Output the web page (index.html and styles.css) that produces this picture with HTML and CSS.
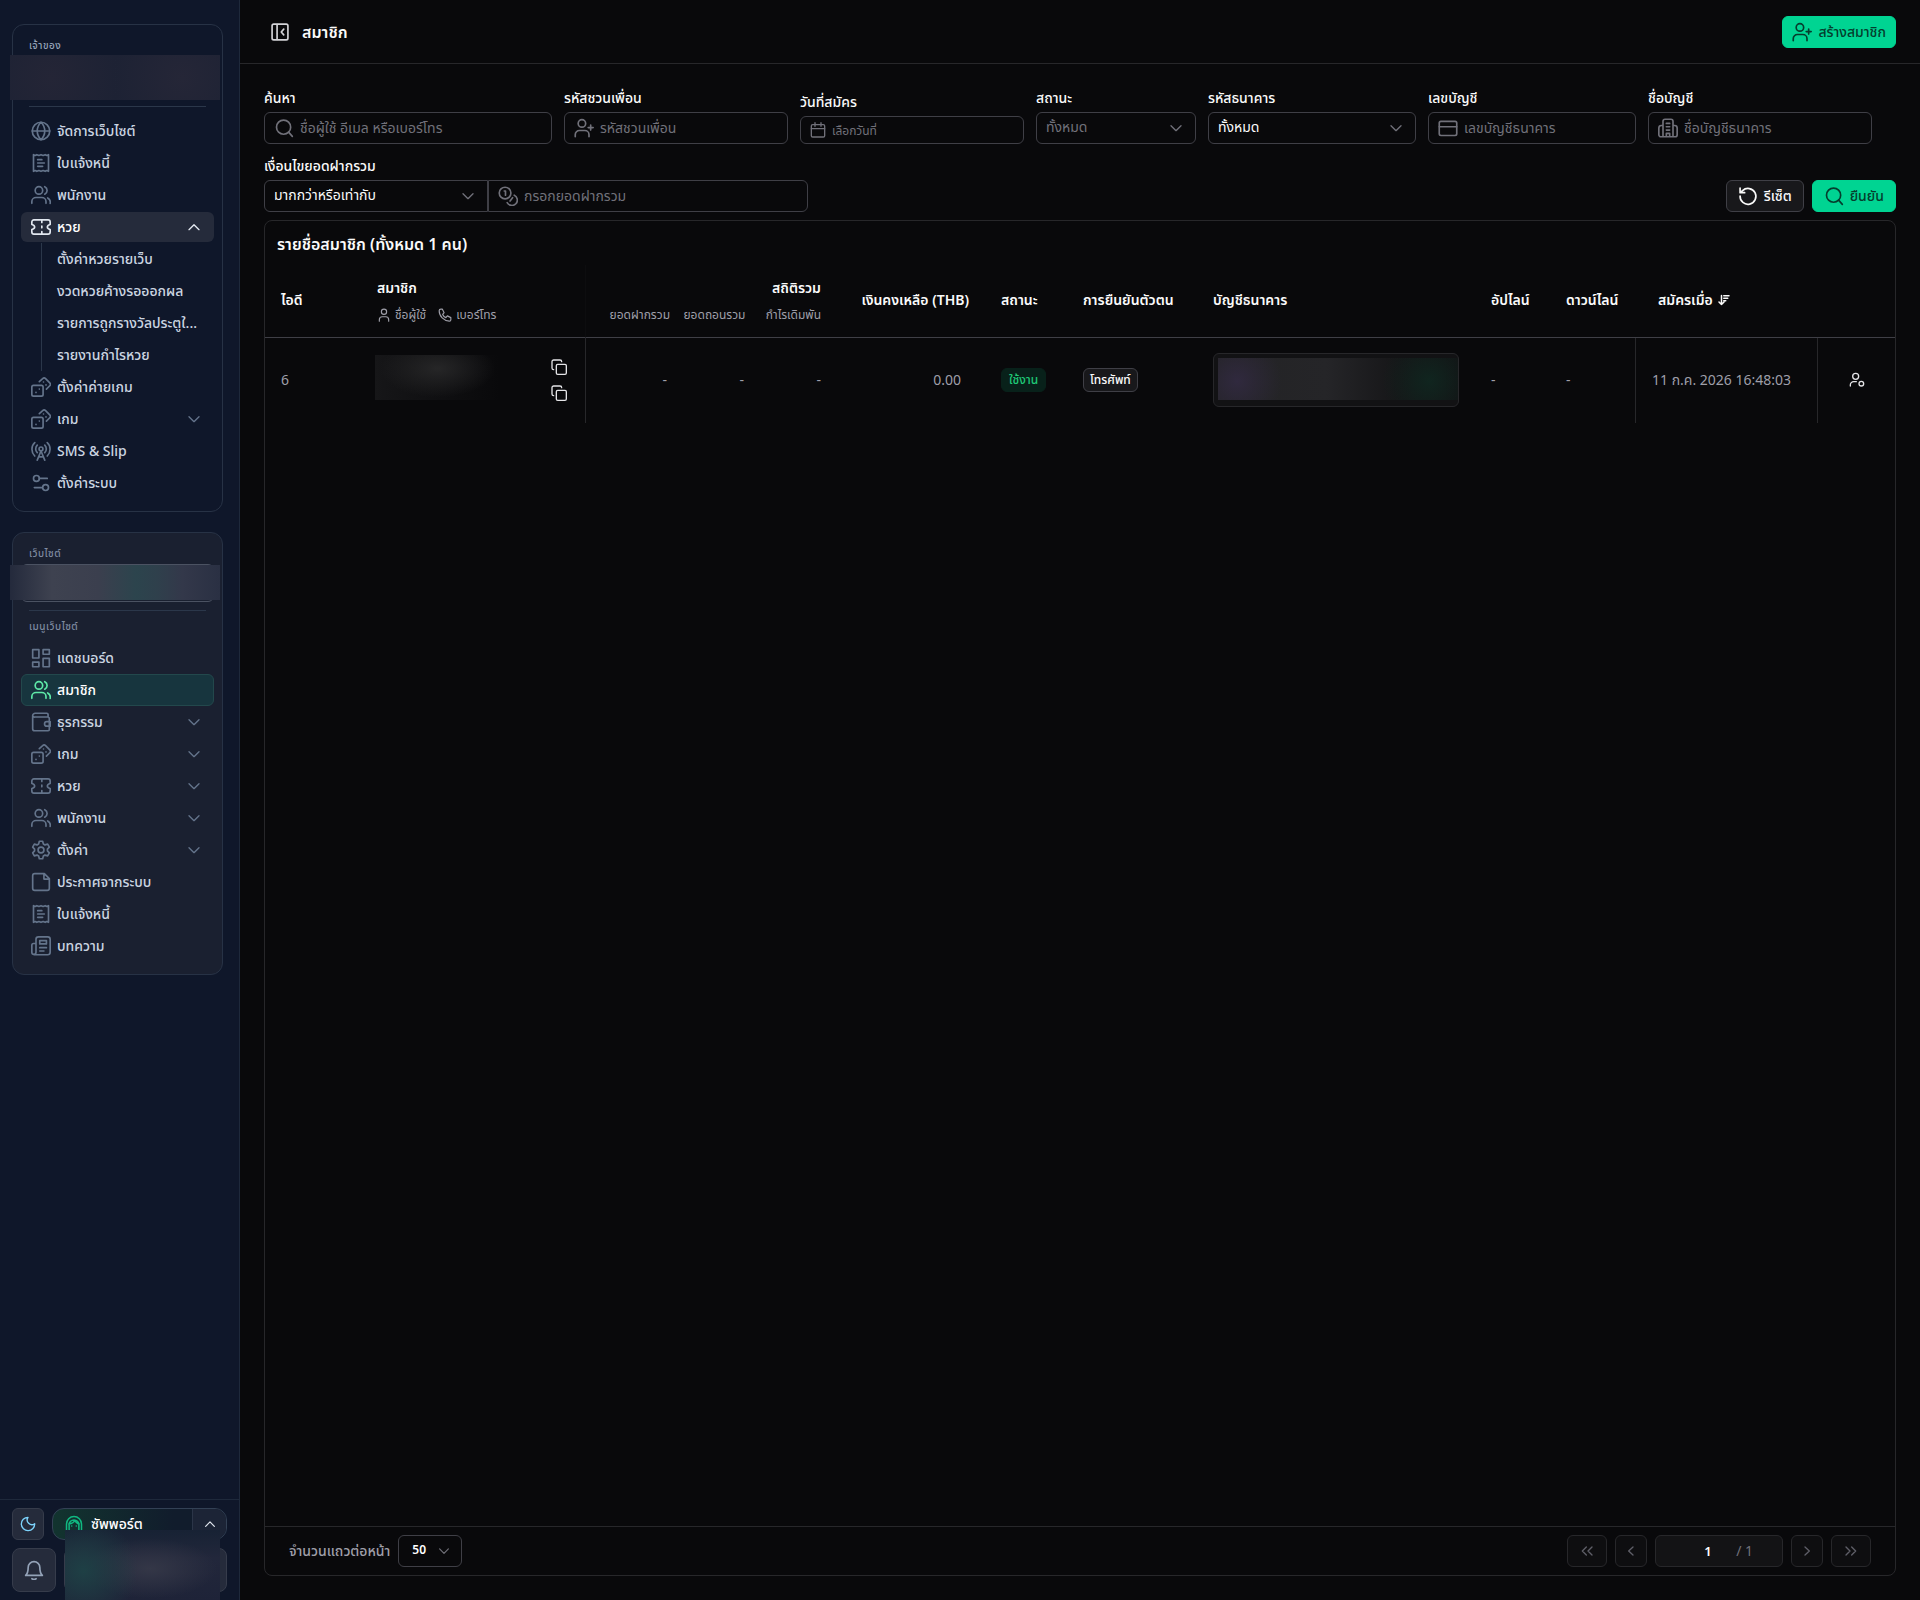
FILE: index.html
```html
<!DOCTYPE html>
<html lang="th">
<head>
    <meta charset="UTF-8">
    <meta name="viewport" content="width=device-width, initial-scale=1.0">
    <title>สมาชิก</title>
    <link rel="stylesheet" href="styles.css">
</head>
<body>

    <!-- Icons -->
    <svg class="icon-defs" aria-hidden="true">
        <symbol id="globe" viewBox="0 0 24 24"><circle cx="12" cy="12" r="10.5"/><path d="M1.5 12h21M12 1.5c-6 6-6 15 0 21M12 1.5c6 6 6 15 0 21"/></symbol>
        <symbol id="receipt" viewBox="0 0 24 24"><path d="M3 2l2 1 2-1 2.500 1L12 2l2.500 1L17 2l2 1 2-1v20l-2-1-2 1-2.500-1-2.500 1-2.500-1L7 22l-2-1-2 1zM8 8h5M8 12h8M8 16h6"/></symbol>
        <symbol id="users" viewBox="0 0 24 24"><circle cx="9.500" cy="6.500" r="4.500"/><path d="M1 22v-2a5 5 0 0 1 5-5h7a5 5 0 0 1 5 5v2M16.500 2a5 5 0 0 1 0 9M20 15.500a6 6 0 0 1 3 6.500"/></symbol>
        <symbol id="ticket" viewBox="0 0 24 24"><path d="M1 9V6a2.500 2.500 0 0 1 2.500-2.500h17A2.500 2.500 0 0 1 23 6v3c-4.500 1-4.500 5 0 6v3a2.500 2.500 0 0 1-2.500 2.500h-17A2.500 2.500 0 0 1 1 18v-3c4.500-1 4.500-5 0-6zM13 4v2.500M13 11v2M13 17.500V20"/></symbol>
        <symbol id="dices" viewBox="0 0 24 24"><rect x="1" y="10" width="13.500" height="13" rx="2"/><path d="M10 5.500l4-3.500a2.500 2.500 0 0 1 3.500 0l5 5a2.500 2.500 0 0 1 0 3.500L18.500 14.500M6 18.500h.01M10 14.500h.01M15 6h.01M18 9.500h.01"/></symbol>
        <symbol id="tower" viewBox="0 0 24 24"><path d="M4.500 18C0 13.500 0 6 4.500 2M7.500 14c-2.500-2.500-2.500-6.500 0-9M16.500 5c2.500 2.500 2.500 6.500 0 9M19.500 2c4.500 4 4.500 11.500 0 16M12 12L7.500 23M12 12l4.500 11M9.500 19h5"/><circle cx="12" cy="9.500" r="2.300"/></symbol>
        <symbol id="sliders" viewBox="0 0 24 24"><circle cx="6.500" cy="6.500" r="3.500"/><path d="M10 6.500h9.500M4 17.500h9.500"/><circle cx="17.500" cy="17.500" r="3.500"/></symbol>
        <symbol id="dashboard" viewBox="0 0 24 24"><path d="M2 2h7.500v10H2zM2 17h7.500v5.500H2zM14.500 2H22v5.500h-7.500zM14.500 12.500H22v10h-7.500z"/></symbol>
        <symbol id="wallet" viewBox="0 0 24 24"><path d="M20.500 6V3a1.500 1.500 0 0 0-1.500-1.500H5A3 3 0 0 0 2 4.500V20a2.500 2.500 0 0 0 2.500 2.500h16A1.500 1.500 0 0 0 22 21V8a2 2 0 0 0-2-2H4.500A2 2 0 0 1 2 4.500M23 11.500h-4a2.750 2.750 0 0 0 0 5.500h4z"/></symbol>
        <symbol id="settings" viewBox="0 0 24 24"><path d="M10 1.500h4l.8 3.200 2 1.200 3.200-.9 2 3.500L19.700 11v2l2.300 2.500-2 3.500-3.200-.9-2 1.200-.8 3.200h-4l-.8-3.200-2-1.200-3.200.9-2-3.500L4.300 13v-2L2 8.500 4 5l3.200.9 2-1.200z"/><circle cx="12" cy="12" r="3.500"/></symbol>
        <symbol id="note" viewBox="0 0 24 24"><path d="M16 2H4.500A2.500 2.500 0 0 0 2 4.500v15A2.500 2.500 0 0 0 4.500 22h15a2.500 2.500 0 0 0 2.500-2.500V8zM15.500 2v6.500H22"/></symbol>
        <symbol id="news" viewBox="0 0 24 24"><path d="M3.500 22.500H20a3 3 0 0 0 3-3V4a3 3 0 0 0-3-3H9a3 3 0 0 0-3 3v15.500a2.500 2.500 0 0 1-5 0V11a2 2 0 0 1 2-2h3M10.500 5.500h8v4h-8zM10.500 14h8M10.500 18h5"/></symbol>
        <symbol id="moon" viewBox="0 0 24 24"><path d="M12 2a7 7 0 0 0 10 9.500A10 10 0 1 1 12 2z"/></symbol>
        <symbol id="bell" viewBox="0 0 24 24"><path d="M2 18.500c2-2 3-4 3-9.500a7 7 0 0 1 14 0c0 5.500 1 7.500 3 9.500zM9.500 22.500c1.500 1 3.500 1 5 0"/></symbol>
        <symbol id="agent" viewBox="0 0 24 24"><path d="M2 22V12a10 10 0 0 1 20 0v10M5.500 22v-9a6.500 6.500 0 0 1 13 0v9M5 12c4-.5 7-2 8-5 1 2.500 3 4.500 6 5M9 14.500h.01M15 14.500h.01"/></symbol>
        <symbol id="panel" viewBox="0 0 24 24"><rect x="2.500" y="2.500" width="19" height="19" rx="2"/><path d="M8.500 3v18M16.500 8.500L13.500 12l3 3.500"/></symbol>
        <symbol id="user-plus" viewBox="0 0 24 24"><circle cx="9.500" cy="6.500" r="4.500"/><path d="M1.500 22.500V20a5 5 0 0 1 5-5h6.500a5 5 0 0 1 5 5v2.500M20 8.500v6M17 11.500h6"/></symbol>
        <symbol id="search" viewBox="0 0 24 24"><circle cx="11.500" cy="11" r="8.500"/><path d="M17.500 17l4.500 5"/></symbol>
        <symbol id="calendar" viewBox="0 0 24 24"><rect x="2" y="4" width="20" height="18.500" rx="2"/><path d="M2 10h20M7.500 1v5.500M16.500 1v5.500"/></symbol>
        <symbol id="down" viewBox="0 0 24 24"><path d="M4.500 8.500l7.500 7.500 7.500-7.500"/></symbol>
        <symbol id="up" viewBox="0 0 24 24"><path d="M4.500 16L12 8.500l7.500 7.500"/></symbol>
        <symbol id="left" viewBox="0 0 24 24"><path d="M15 6l-6.500 6 6.500 6"/></symbol>
        <symbol id="right" viewBox="0 0 24 24"><path d="M9 6l6.500 6L9 18"/></symbol>
        <symbol id="first" viewBox="0 0 24 24"><path d="M11 6l-6 6 6 6M19.500 6l-6 6 6 6"/></symbol>
        <symbol id="last" viewBox="0 0 24 24"><path d="M4.500 6l6 6-6 6M13 6l6 6-6 6"/></symbol>
        <symbol id="card" viewBox="0 0 24 24"><rect x="1.500" y="4" width="21" height="17" rx="2"/><path d="M1.500 10.500h21"/></symbol>
        <symbol id="building" viewBox="0 0 24 24"><path d="M6 22.500V4a2.500 2.500 0 0 1 2.500-2.500h7A2.500 2.500 0 0 1 18 4v18.500M6 9H4a3 3 0 0 0-3 3v8a2.500 2.500 0 0 0 2.500 2.500h17A2.500 2.500 0 0 0 23 20v-8a3 3 0 0 0-3-3h-2M10 6.500h4M10 10.500h4M10 14.500h4M10 22v-3.500h4V22"/></symbol>
        <symbol id="coins" viewBox="0 0 24 24"><circle cx="8.500" cy="8.500" r="7"/><path d="M7.500 6H9v5M19.500 11a6.500 6.500 0 1 1-8.500 9M17.500 14l-3 4"/></symbol>
        <symbol id="undo" viewBox="0 0 24 24"><path d="M2.500 12a9.500 9.500 0 1 0 3-6.500L2.500 8M2.500 2.500V8H8"/></symbol>
        <symbol id="user" viewBox="0 0 24 24"><circle cx="12" cy="6.500" r="4.500"/><path d="M4 22.500V20a5 5 0 0 1 5-5h6a5 5 0 0 1 5 5v2.500"/></symbol>
        <symbol id="phone" viewBox="0 0 24 24"><path d="M2 4.500C2 3 3.500 2 5 2h2.500l3 6-2.500 3c1 2.500 3 4.500 5.500 5.500l2.500-3 6 3V20c0 1.500-1 2.500-2.500 2.500C10 22 2 14 2 4.500z"/></symbol>
        <symbol id="copy" viewBox="0 0 24 24"><rect x="8" y="8" width="15" height="15" rx="2"/><path d="M4 16a2.500 2.500 0 0 1-2.500-2.500V4A2.500 2.500 0 0 1 4 1.500h9.500A2.500 2.500 0 0 1 16 4"/></symbol>
        <symbol id="sort" viewBox="0 0 24 24"><path d="M7 3v18M2 16l5 5 5-5M11.500 3.500H22M11.500 8.500h8M11.500 13.500h4"/></symbol>
        <symbol id="user-cog" viewBox="0 0 24 24"><circle cx="10" cy="6.500" r="4.500"/><path d="M2 21v-1.500a5 5 0 0 1 5-5h4"/><circle cx="18.500" cy="17.500" r="3.500"/></symbol>
    </svg>

    <aside class="sidebar">
        <div class="sidebar-scroll">

            <!-- Owner -->
            <section class="nav-card">
                <p class="nav-label">เจ้าของ</p>
                <div class="masked masked-owner"></div>
                <hr class="nav-line">
                <nav class="nav-list">
                    <a class="nav-item" href="#"><svg class="icon"><use href="#globe"/></svg><span>จัดการเว็บไซต์</span></a>
                    <a class="nav-item" href="#"><svg class="icon"><use href="#receipt"/></svg><span>ใบแจ้งหนี้</span></a>
                    <a class="nav-item" href="#"><svg class="icon"><use href="#users"/></svg><span>พนักงาน</span></a>
                    <button class="nav-item opened" type="button"><svg class="icon"><use href="#ticket"/></svg><span>หวย</span><svg class="chevron"><use href="#up"/></svg></button>
                    <div class="nav-sub">
                        <a href="#">ตั้งค่าหวยรายเว็บ</a>
                        <a href="#">งวดหวยค้างรอออกผล</a>
                        <a href="#">รายการถูกรางวัลประตูใ...</a>
                        <a href="#">รายงานกำไรหวย</a>
                    </div>
                    <a class="nav-item" href="#"><svg class="icon"><use href="#dices"/></svg><span>ตั้งค่าค่ายเกม</span></a>
                    <button class="nav-item" type="button"><svg class="icon"><use href="#dices"/></svg><span>เกม</span><svg class="chevron"><use href="#down"/></svg></button>
                    <a class="nav-item" href="#"><svg class="icon"><use href="#tower"/></svg><span>SMS &amp; Slip</span></a>
                    <a class="nav-item" href="#"><svg class="icon"><use href="#sliders"/></svg><span>ตั้งค่าระบบ</span></a>
                </nav>
            </section>

            <!-- Website -->
            <section class="nav-card site-card">
                <p class="nav-label">เว็บไซต์</p>
                <div class="site-picker"><div class="masked masked-site"></div></div>
                <hr class="nav-line">
                <p class="nav-label menu-label">เมนูเว็บไซต์</p>
                <nav class="nav-list">
                    <a class="nav-item" href="#"><svg class="icon"><use href="#dashboard"/></svg><span>แดชบอร์ด</span></a>
                    <a class="nav-item current" href="#" aria-current="page"><svg class="icon"><use href="#users"/></svg><span>สมาชิก</span></a>
                    <button class="nav-item" type="button"><svg class="icon"><use href="#wallet"/></svg><span>ธุรกรรม</span><svg class="chevron"><use href="#down"/></svg></button>
                    <button class="nav-item" type="button"><svg class="icon"><use href="#dices"/></svg><span>เกม</span><svg class="chevron"><use href="#down"/></svg></button>
                    <button class="nav-item" type="button"><svg class="icon"><use href="#ticket"/></svg><span>หวย</span><svg class="chevron"><use href="#down"/></svg></button>
                    <button class="nav-item" type="button"><svg class="icon"><use href="#users"/></svg><span>พนักงาน</span><svg class="chevron"><use href="#down"/></svg></button>
                    <button class="nav-item" type="button"><svg class="icon"><use href="#settings"/></svg><span>ตั้งค่า</span><svg class="chevron"><use href="#down"/></svg></button>
                    <a class="nav-item" href="#"><svg class="icon"><use href="#note"/></svg><span>ประกาศจากระบบ</span></a>
                    <a class="nav-item" href="#"><svg class="icon"><use href="#receipt"/></svg><span>ใบแจ้งหนี้</span></a>
                    <a class="nav-item" href="#"><svg class="icon"><use href="#news"/></svg><span>บทความ</span></a>
                </nav>
            </section>
        </div>

        <div class="sidebar-footer">
            <div class="footer-row">
                <button class="theme-button" type="button" aria-label="theme"><svg class="icon"><use href="#moon"/></svg></button>
                <div class="support">
                    <button class="support-main" type="button"><svg class="icon"><use href="#agent"/></svg><span>ซัพพอร์ต</span></button>
                    <button class="support-more" type="button" aria-label="more"><svg class="icon"><use href="#up"/></svg></button>
                </div>
            </div>
            <div class="footer-row">
                <button class="bell-button" type="button" aria-label="notifications"><svg class="icon"><use href="#bell"/></svg></button>
                <div class="account"><div class="masked masked-account"></div></div>
            </div>
        </div>
    </aside>

    <main class="main">
        <header class="topbar">
            <button class="panel-button" type="button" aria-label="sidebar"><svg class="icon"><use href="#panel"/></svg></button>
            <h1>สมาชิก</h1>
            <button class="button primary create" type="button"><svg class="icon"><use href="#user-plus"/></svg>สร้างสมาชิก</button>
        </header>

        <div class="content">
            <form class="filters">
                <div class="field w-288">
                    <label for="search-text">ค้นหา</label>
                    <div class="control"><svg class="icon"><use href="#search"/></svg><input id="search-text" type="text" placeholder="ชื่อผู้ใช้ อีเมล หรือเบอร์โทร"></div>
                </div>
                <div class="field w-224">
                    <label for="referral">รหัสชวนเพื่อน</label>
                    <div class="control"><svg class="icon"><use href="#user-plus"/></svg><input id="referral" type="text" placeholder="รหัสชวนเพื่อน"></div>
                </div>
                <div class="field w-224">
                    <label for="date">วันที่สมัคร</label>
                    <div class="control small"><svg class="icon"><use href="#calendar"/></svg><input id="date" type="text" placeholder="เลือกวันที่"></div>
                </div>
                <div class="field w-160">
                    <label for="status">สถานะ</label>
                    <div class="control muted"><select id="status"><option>ทั้งหมด</option></select><svg class="chevron"><use href="#down"/></svg></div>
                </div>
                <div class="field w-208">
                    <label for="bank">รหัสธนาคาร</label>
                    <div class="control"><select id="bank"><option>ทั้งหมด</option></select><svg class="chevron"><use href="#down"/></svg></div>
                </div>
                <div class="field w-208">
                    <label for="acc-no">เลขบัญชี</label>
                    <div class="control"><svg class="icon"><use href="#card"/></svg><input id="acc-no" type="text" placeholder="เลขบัญชีธนาคาร"></div>
                </div>
                <div class="field w-224">
                    <label for="acc-name">ชื่อบัญชี</label>
                    <div class="control"><svg class="icon"><use href="#building"/></svg><input id="acc-name" type="text" placeholder="ชื่อบัญชีธนาคาร"></div>
                </div>
                <div class="field deposit">
                    <label for="deposit-rule">เงื่อนไขยอดฝากรวม</label>
                    <div class="control-group">
                        <div class="control w-224"><select id="deposit-rule"><option>มากกว่าหรือเท่ากับ</option></select><svg class="chevron"><use href="#down"/></svg></div>
                        <div class="control w-320"><svg class="icon"><use href="#coins"/></svg><input type="text" aria-label="กรอกยอดฝากรวม" placeholder="กรอกยอดฝากรวม"></div>
                    </div>
                </div>
                <div class="filter-actions">
                    <button class="button" type="reset"><svg class="icon"><use href="#undo"/></svg>รีเซ็ต</button>
                    <button class="button primary" type="submit"><svg class="icon"><use href="#search"/></svg>ยืนยัน</button>
                </div>
            </form>

            <section class="panel">
                <h2>รายชื่อสมาชิก (ทั้งหมด 1 คน)</h2>
                <div class="table-wrap">
                    <table>
                        <colgroup>
                            <col class="c-id"><col class="c-member"><col class="c-stats"><col class="c-balance"><col class="c-status"><col class="c-verify"><col class="c-bank"><col class="c-up"><col class="c-down"><col class="c-date"><col class="c-action">
                        </colgroup>
                        <thead>
                            <tr>
                                <th>ไอดี</th>
                                <th class="split-line">
                                    สมาชิก
                                    <div class="head-sub"><span><svg class="icon"><use href="#user"/></svg>ชื่อผู้ใช้</span><span><svg class="icon"><use href="#phone"/></svg>เบอร์โทร</span></div>
                                </th>
                                <th class="stats-head">
                                    สถิติรวม
                                    <div class="stats"><span>ยอดฝากรวม</span><span>ยอดถอนรวม</span><span>กำไรเดิมพัน</span></div>
                                </th>
                                <th class="number">เงินคงเหลือ (THB)</th>
                                <th>สถานะ</th>
                                <th>การยืนยันตัวตน</th>
                                <th>บัญชีธนาคาร</th>
                                <th>อัปไลน์</th>
                                <th>ดาวน์ไลน์</th>
                                <th><button class="sort" type="button">สมัครเมื่อ<svg class="icon"><use href="#sort"/></svg></button></th>
                                <th></th>
                            </tr>
                        </thead>
                        <tbody>
                            <tr>
                                <td>6</td>
                                <td class="line">
                                    <div class="member">
                                        <div class="masked masked-member"></div>
                                        <div class="copies">
                                            <button type="button" aria-label="copy"><svg class="icon"><use href="#copy"/></svg></button>
                                            <button type="button" aria-label="copy"><svg class="icon"><use href="#copy"/></svg></button>
                                        </div>
                                    </div>
                                </td>
                                <td><div class="stats values"><span>-</span><span>-</span><span>-</span></div></td>
                                <td class="number">0.00</td>
                                <td><span class="badge active">ใช้งาน</span></td>
                                <td><span class="badge">โทรศัพท์</span></td>
                                <td><div class="bank-box"><div class="masked masked-bank"></div></div></td>
                                <td>-</td>
                                <td class="line">-</td>
                                <td class="line">11 ก.ค. 2026 16:48:03</td>
                                <td class="action"><button type="button" aria-label="manage"><svg class="icon"><use href="#user-cog"/></svg></button></td>
                            </tr>
                        </tbody>
                    </table>
                </div>
                <footer class="pager">
                    <label for="rows">จำนวนแถวต่อหน้า</label>
                    <div class="control rows"><select id="rows"><option>50</option></select><svg class="chevron"><use href="#down"/></svg></div>
                    <div class="pages">
                        <button class="page-button wide" type="button" aria-label="first" disabled><svg class="icon"><use href="#first"/></svg></button>
                        <button class="page-button" type="button" aria-label="previous" disabled><svg class="icon"><use href="#left"/></svg></button>
                        <div class="page-box"><input type="text" value="1" aria-label="page"><span>/ 1</span></div>
                        <button class="page-button" type="button" aria-label="next" disabled><svg class="icon"><use href="#right"/></svg></button>
                        <button class="page-button wide" type="button" aria-label="last" disabled><svg class="icon"><use href="#last"/></svg></button>
                    </div>
                </footer>
            </section>
        </div>
    </main>

</body>
</html>
```
FILE: styles.css
```css
* {
    box-sizing: border-box;
}

body {
    margin: 0;
    display: flex;
    min-height: 100vh;
    background-color: #09090b;
    color: #fafafa;
    font-family: "Noto Sans", "Noto Sans Thai", sans-serif;
    font-size: 14px;
    line-height: 20px;
}

button, input, select {
    font: inherit;
    color: inherit;
    background: none;
    border: none;
    padding: 0;
    margin: 0;
}

button {
    cursor: pointer;
}

a {
    color: inherit;
    text-decoration: none;
}

.icon-defs {
    position: absolute;
    width: 0;
    height: 0;
}

.icon, .chevron {
    flex: none;
    width: 20px;
    height: 20px;
    fill: none;
    stroke: currentColor;
    stroke-width: 2;
    stroke-linecap: round;
    stroke-linejoin: round;
}

.chevron {
    width: 16px;
    height: 16px;
}

/* Sidebar */
.sidebar {
    position: sticky;
    top: 0;
    flex: none;
    display: flex;
    flex-direction: column;
    width: 240px;
    height: 100vh;
    background-color: #0f172a;
    border-right: 1px solid #1e293b;
    color: #cbd5e1;
    overflow: hidden;
}

.sidebar-scroll {
    flex: 1;
    min-height: 0;
    display: flex;
    flex-direction: column;
    gap: 20px;
    padding: 24px 16px 0 12px;
    overflow: hidden;
}

.nav-card {
    flex: none;
    padding: 10px 8px 12px;
    border: 1px solid #273245;
    border-radius: 12px;
}

.site-card {
    background-color: #1a2030;
}

.nav-label {
    margin: 0;
    padding: 0 8px;
    font-size: 10px;
    line-height: 20px;
    font-weight: 500;
    letter-spacing: 0.5px;
    color: #94a3b8;
}

.site-card .nav-label {
    color: #7f8ba0;
}

.nav-line {
    height: 1px;
    margin: 6px 8px 8px;
    border: none;
    background-color: #2b374a;
}

.site-card .nav-line {
    margin: 8px 8px 5px;
}

.nav-item {
    display: flex;
    align-items: center;
    gap: 6px;
    width: 100%;
    height: 32px;
    padding: 0 11px 0 9px;
    border: 1px solid transparent;
    border-radius: 6px;
    font-weight: 500;
    text-align: left;
}

.nav-item .icon {
    color: #64748b;
}

.nav-item span {
    flex: 1;
}

.nav-item .chevron {
    color: #64748b;
}

.nav-item.opened {
    height: 30px;
    margin: 1px 0;
    background-color: #252b3b;
    color: #fff;
}

.nav-item.opened .icon, .nav-item.opened .chevron {
    color: #e2e8f0;
}

.nav-item.current {
    background-color: #17353e;
    border-color: #23484c;
    color: #fff;
}

.nav-item.current .icon {
    color: #5ee9a8;
}

.nav-sub {
    margin-left: 20px;
    border-left: 1px solid #2b374a;
    font-weight: 500;
}

.nav-sub a {
    display: block;
    height: 32px;
    padding-left: 15px;
    line-height: 32px;
    white-space: nowrap;
}

/* Hidden account details */
.masked-owner {
    height: 45px;
    margin: 0 -6px 0 -11px;
    background: radial-gradient(circle at 20% 50%, #242536, transparent 40%), radial-gradient(circle at 82% 50%, #252637, transparent 40%), #1d2234;
}

.site-picker {
    height: 38px;
    margin-top: 1px;
    border: 1px solid #4b5262;
    border-radius: 6px;
}

.masked-site {
    height: 35px;
    margin: 0 -7px 0 -12px;
    background: linear-gradient(90deg, #242a3c, #3e4250 20%, #3b3f4e 42%, #2c444d 60%, #2f404c 70%, #33384a 82%, #2a3043);
}

.menu-label {
    margin-bottom: 6px;
}

.sidebar-footer {
    flex: none;
    display: flex;
    flex-direction: column;
    gap: 8px;
    padding: 8px 12px;
    border-top: 1px solid #1e293b;
}

.footer-row {
    display: flex;
    gap: 8px;
}

.theme-button, .bell-button {
    flex: none;
    display: flex;
    align-items: center;
    justify-content: center;
    width: 32px;
    height: 32px;
    background-color: #252b3b;
    border: 1px solid #363c4b;
    border-radius: 6px;
    color: #7dd3fc;
}

.theme-button .icon {
    width: 16px;
    height: 16px;
}

.bell-button {
    width: 44px;
    height: 44px;
    border-radius: 8px;
    color: #94a3b8;
}

.support {
    flex: 1;
    display: flex;
    height: 32px;
    border: 1px solid #334155;
    border-radius: 12px;
    background: linear-gradient(90deg, #12342f, #111c2c 70%);
    overflow: hidden;
}

.support-main {
    flex: 1;
    display: flex;
    align-items: center;
    gap: 8px;
    padding-left: 12px;
    color: #fff;
    font-weight: 500;
}

.support-main .icon {
    width: 18px;
    height: 18px;
    color: #10b981;
}

.support-more {
    display: flex;
    align-items: center;
    justify-content: center;
    width: 34px;
    background-color: #1c2436;
    border-left: 1px solid #2b3548;
    color: #e2e8f0;
}

.support-more .icon {
    width: 14px;
    height: 14px;
}

.account {
    position: relative;
    flex: 1;
    height: 44px;
    border: 1px solid #363c4b;
    border-radius: 8px;
    background-color: #252b3b;
}

.masked-account {
    position: absolute;
    left: 0;
    right: 6px;
    top: -19px;
    bottom: -9px;
    background: radial-gradient(circle at 12% 58%, #1e4045, transparent 38%), radial-gradient(ellipse at 55% 55%, #343747, transparent 55%), linear-gradient(#172234, #22273b 40%, #1e2338);
}

/* Main */
.main {
    flex: 1;
    min-width: 0;
    display: flex;
    flex-direction: column;
}

.topbar {
    display: flex;
    align-items: center;
    gap: 12px;
    height: 64px;
    padding: 0 24px 0 30px;
    border-bottom: 1px solid #27272a;
}

.panel-button {
    display: flex;
    color: #d4d4d8;
}

h1 {
    flex: 1;
    margin: 0;
    font-size: 16px;
    line-height: 24px;
    font-weight: 600;
}

.button {
    display: flex;
    align-items: center;
    gap: 6px;
    height: 32px;
    padding: 0 11px;
    background-color: #18181b;
    border: 1px solid #3f3f46;
    border-radius: 6px;
    font-weight: 500;
}

.button.primary {
    background-color: #00d492;
    border-color: #00d492;
    color: #053d2d;
}

.button.create {
    padding: 0 9px;
}

.content {
    flex: 1;
    display: flex;
    flex-direction: column;
    gap: 8px;
    padding: 24px;
}

.filters {
    display: flex;
    flex-wrap: wrap;
    align-items: flex-end;
    gap: 12px;
}

.field {
    display: flex;
    flex-direction: column;
    gap: 4px;
}

.field label {
    font-weight: 500;
}

.w-160 { width: 160px; }
.w-208 { width: 208px; }
.w-224 { width: 224px; }
.w-288 { width: 288px; }
.w-320 { width: 320px; }

.control {
    display: flex;
    align-items: center;
    gap: 6px;
    height: 32px;
    padding: 0 9px;
    border: 1px solid #3f3f46;
    border-radius: 6px;
}

.control .icon, .control .chevron {
    color: #71717a;
}

.control .chevron {
    margin-right: 2px;
}

.control input, .control select {
    flex: 1;
    min-width: 0;
    height: 30px;
    padding-bottom: 2px;
    outline: none;
}

.control select {
    appearance: none;
}

.control.muted select, .control input::placeholder {
    color: #71717a;
    opacity: 1;
}

.control.small {
    height: 28px;
    font-size: 12px;
}

.control.small input {
    height: 26px;
    padding-bottom: 0;
}

.control.small .icon {
    width: 16px;
    height: 16px;
}

.control-group {
    display: flex;
}

.control-group .control:first-child {
    border-radius: 6px 0 0 6px;
}

.control-group .control:last-child {
    border-radius: 0 6px 6px 0;
}

.filter-actions {
    display: flex;
    gap: 8px;
    margin-left: auto;
}

/* Members table */
.panel {
    flex: 1;
    display: flex;
    flex-direction: column;
    border: 1px solid #27272a;
    border-radius: 8px;
}

h2 {
    margin: 0;
    padding: 11px 12px 9px;
    font-size: 16px;
    line-height: 24px;
    font-weight: 600;
}

.table-wrap {
    flex: 1;
}

table {
    width: 100%;
    table-layout: fixed;
    border-collapse: separate;
    border-spacing: 0;
}

.c-id { width: 96px; }
.c-member { width: 225px; }
.c-stats { width: 251px; }
.c-balance { width: 148px; }
.c-status { width: 82px; }
.c-verify { width: 130px; }
.c-bank { width: 278px; }
.c-up { width: 75px; }
.c-down { width: 86px; }
.c-date { width: 182px; }
.c-action { width: 77px; }

th, td {
    padding: 0 16px 2px;
    text-align: left;
    white-space: nowrap;
}

th {
    height: 73px;
    border-bottom: 1px solid #3f3f46;
    font-weight: 600;
}

th.split-line {
    border-right: 1px solid #0d0d0f;
}

th.split-line, th.stats-head {
    padding-bottom: 0;
}

td {
    height: 85px;
    color: #9f9fa9;
}

td.line {
    border-right: 1px solid #27272a;
}

th.number {
    text-align: right;
}

td.number {
    padding-right: 24px;
    text-align: right;
}

.head-sub {
    display: flex;
    gap: 12px;
    margin-top: 7px;
    font-size: 12px;
    font-weight: 400;
    color: #9f9fa9;
}

.head-sub span {
    display: flex;
    align-items: center;
    gap: 4px;
}

.head-sub .icon {
    width: 14px;
    height: 14px;
}

.stats-head {
    text-align: right;
}

.stats {
    display: grid;
    grid-template-columns: 61px 1fr 1fr;
    gap: 12px;
    margin-top: 7px;
    padding-left: 7px;
    font-size: 12px;
    font-weight: 400;
    text-align: right;
    color: #9f9fa9;
}

.stats.values {
    grid-template-columns: repeat(3, 1fr);
    margin-top: 0;
    padding-left: 0;
    font-size: 14px;
}

.member, .copies {
    display: flex;
}

.member {
    align-items: center;
    justify-content: space-between;
    margin-left: -2px;
    padding-right: 2px;
}

.masked-member {
    width: 125px;
    height: 45px;
    margin-bottom: 4px;
    background: radial-gradient(ellipse at 50% 30%, #262627, transparent 65%), linear-gradient(90deg, #161618, transparent);
}

.copies {
    flex-direction: column;
    gap: 10px;
}

.copies button, .action button {
    display: flex;
    color: #e4e4e7;
}

.copies .icon, .action .icon {
    width: 16px;
    height: 16px;
}

.action button {
    margin: 0 auto;
}

.badge {
    display: inline-block;
    padding: 1px 6px;
    border: 1px solid #3f3f46;
    border-radius: 6px;
    background-color: #18181b;
    color: #fafafa;
    font-size: 12px;
    font-weight: 500;
}

.badge.active {
    padding: 1px 7px;
    background-color: #08211a;
    border-color: #08211a;
    color: #1fc977;
}

.bank-box {
    height: 54px;
    padding: 4px 0 6px 4px;
    border: 1px solid #27272a;
    border-radius: 6px;
    background-color: #121214;
}

.masked-bank {
    height: 42px;
    background: radial-gradient(circle at 8% 55%, #30293e, transparent 20%), radial-gradient(circle at 88% 55%, #10251f, transparent 22%), linear-gradient(90deg, #232325, #252528 45%, #161618 75%, #121214);
}

.sort {
    display: flex;
    align-items: center;
    gap: 5px;
    padding-left: 6px;
    font-weight: 600;
}

.sort .icon {
    width: 12px;
    height: 12px;
    stroke-width: 3;
}

.pager {
    display: flex;
    align-items: center;
    gap: 8px;
    height: 49px;
    padding: 0 24px;
    border-top: 1px solid #27272a;
    color: #9f9fa9;
}

.pager label {
    font-weight: 500;
}

.rows {
    width: 64px;
    padding: 0 10px 0 13px;
    color: #fff;
    font-size: 12px;
    font-weight: 600;
}

.rows .chevron {
    width: 14px;
    height: 14px;
    margin: 0;
}

.pages {
    display: flex;
    gap: 8px;
    margin-left: auto;
}

.page-button {
    display: flex;
    align-items: center;
    justify-content: center;
    width: 32px;
    height: 32px;
    border: 1px solid #27272a;
    border-radius: 6px;
    background-color: #0e0e10;
    color: #5f5f68;
}

.page-button.wide {
    width: 40px;
}

.page-button .icon {
    width: 16px;
    height: 16px;
}

.page-box {
    display: flex;
    align-items: center;
    gap: 4px;
    width: 128px;
    height: 32px;
    padding: 0 29px 0 28px;
    border: 1px solid #27272a;
    border-radius: 6px;
    background-color: #131315;
    color: #71717a;
}

.page-box input {
    flex: 1;
    min-width: 0;
    height: 30px;
    color: #fff;
    font-size: 13px;
    font-weight: 600;
    text-align: center;
}
```
